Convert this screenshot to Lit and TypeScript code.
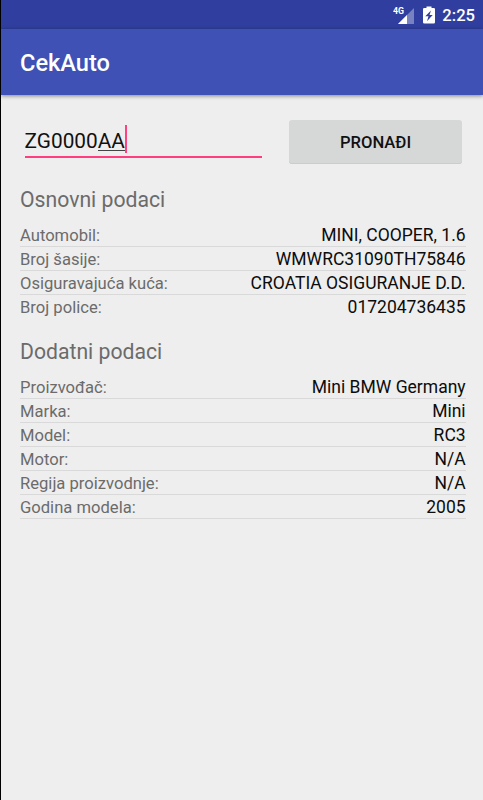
import { LitElement, html, css } from "lit";
import { customElement, property } from "lit/decorators.js";

interface Entry {
  label: string;
  value: string;
}

@customElement("status-bar")
class StatusBar extends LitElement {
  static styles = css`
    :host {
      display: flex;
      align-items: center;
      justify-content: flex-end;
      height: 29px;
      padding-right: 8px;
      box-sizing: border-box;
      background: #303f9f;
      color: #fff;
    }
    .signal {
      width: 22px;
      height: 20px;
      margin-right: 8px;
    }
    .net {
      font: 700 9.5px Roboto, sans-serif;
      fill: #fff;
    }
    .battery {
      width: 12px;
      height: 18px;
      margin-right: 7px;
    }
    .time {
      font: 500 16.6px/29px Roboto, sans-serif;
      padding-top: 2px;
    }
  `;

  render() {
    return html`
      <svg class="signal" viewBox="0 0 22 20">
        <path d="M21 3V19H5Z" fill="#fff" fill-opacity=".35" />
        <path d="M14 10V19H5Z" fill="#fff" />
        <text class="net" x="0" y="9" textLength="11" lengthAdjust="spacingAndGlyphs">4G</text>
      </svg>
      <svg class="battery" viewBox="0 0 12 18">
        <path
          d="M1.200 2H3.500V.5H8.500V2H10.800Q12 2 12 3.200V16.300Q12 17.500 10.800 17.500H1.200Q0 17.500 0 16.300V3.200Q0 2 1.200 2Z"
          fill="#fff"
        />
        <path d="M8 4.500L2.300 10.300H5.500L4 15.200L9.700 9H6.500Z" fill="#303f9f" />
      </svg>
      <span class="time">2:25</span>
    `;
  }
}

@customElement("data-section")
class DataSection extends LitElement {
  @property() heading = "";
  @property({ attribute: false }) entries: Entry[] = [];

  static styles = css`
    :host {
      display: block;
    }
    .heading {
      margin: 0;
      height: 47px;
      font: 400 21.2px/48px Roboto, sans-serif;
      color: #6b6b6b;
    }
    .list {
      margin: 0;
    }
    .row {
      display: flex;
      justify-content: space-between;
      height: 24px;
      box-sizing: border-box;
      border-bottom: 1px solid #d9d9d9;
      font: 400 16.6px/24px Roboto, sans-serif;
      white-space: nowrap;
    }
    :host([open-end]) .row:last-child {
      border-bottom-color: transparent;
    }
    .label {
      color: #6b6b6b;
      line-height: 25px;
    }
    .value {
      margin: 0;
      color: #0c0c0c;
      font-size: 17.5px;
    }
  `;

  render() {
    return html`
      <h2 class="heading">${this.heading}</h2>
      <dl class="list">
        ${this.entries.map(
          (e) => html`<div class="row">
            <dt class="label">${e.label}</dt>
            <dd class="value">${e.value}</dd>
          </div>`
        )}
      </dl>
    `;
  }
}

@customElement("app-root")
class AppRoot extends LitElement {
  static styles = css`
    :host {
      display: flex;
      flex-direction: column;
      height: 800px;
      box-sizing: border-box;
      border-left: 1px solid #000;
      background: #eee;
      font-family: Roboto, sans-serif;
      overflow: hidden;
    }
    .toolbar {
      height: 66px;
      padding-left: 19px;
      background: #3f51b5;
      color: #fff;
      box-shadow: 0 1px 4px rgba(0, 0, 0, 0.45);
    }
    .title {
      margin: 0;
      font: 500 23.6px/69px Roboto, sans-serif;
    }
    .content {
      padding: 25px 17.4px 0 19px;
    }
    .search {
      display: flex;
      justify-content: space-between;
      height: 56px;
      padding: 0 3.6px 0 4.6px;
    }
    .field {
      display: flex;
      align-items: flex-start;
      width: 237px;
      height: 38px;
      box-sizing: border-box;
      border-bottom: 2px solid #ff3d7f;
      font-size: 20.8px;
      line-height: 42px;
      color: #111;
    }
    .composing {
      height: 31px;
      border-bottom: 1px solid #444;
      box-sizing: border-box;
    }
    .caret {
      width: 2px;
      height: 28px;
      margin-top: 5px;
      background: #ff4081;
    }
    .find {
      width: 173px;
      height: 44px;
      padding: 0;
      border: 0;
      border-radius: 3px;
      background: #d6d8d7;
      box-shadow: inset 0 -1px #cbcdcc;
      color: #111;
      font: 500 16.6px Roboto, sans-serif;
    }
    .second {
      margin-top: 9px;
    }
  `;

  private basic: Entry[] = [
    { label: "Automobil:", value: "MINI, COOPER, 1.6" },
    { label: "Broj šasije:", value: "WMWRC31090TH75846" },
    { label: "Osiguravajuća kuća:", value: "CROATIA OSIGURANJE D.D." },
    { label: "Broj police:", value: "017204736435" },
  ];

  private extra: Entry[] = [
    { label: "Proizvođač:", value: "Mini BMW Germany" },
    { label: "Marka:", value: "Mini" },
    { label: "Model:", value: "RC3" },
    { label: "Motor:", value: "N/A" },
    { label: "Regija proizvodnje:", value: "N/A" },
    { label: "Godina modela:", value: "2005" },
  ];

  render() {
    return html`
      <status-bar></status-bar>
      <header class="toolbar"><h1 class="title">CekAuto</h1></header>
      <main class="content">
        <div class="search">
          <div class="field">
            <span>ZG0000</span><span class="composing">AA</span><span class="caret"></span>
          </div>
          <button class="find">PRONAĐI</button>
        </div>
        <data-section open-end heading="Osnovni podaci" .entries=${this.basic}></data-section>
        <data-section class="second" heading="Dodatni podaci" .entries=${this.extra}></data-section>
      </main>
    `;
  }
}
